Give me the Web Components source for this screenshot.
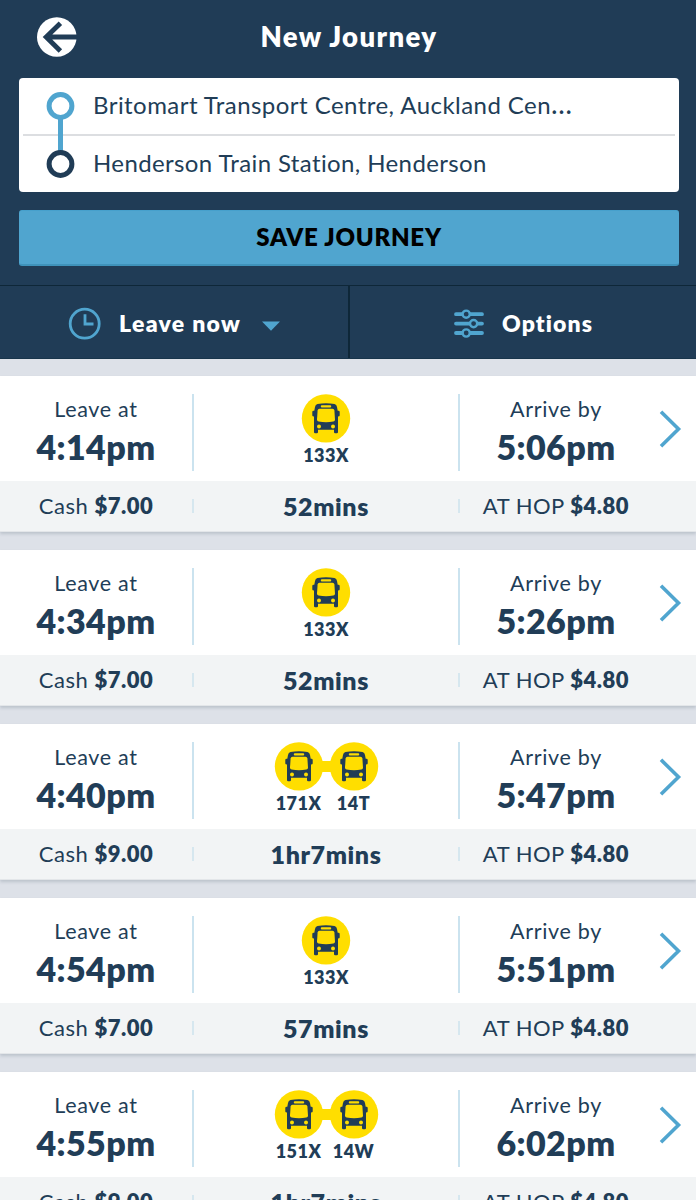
<!DOCTYPE html>
<html lang="en">
<head>
<meta charset="utf-8">
<title>New Journey</title>
<style>
    html {
        background: #dde1e8;
    }

    body {
        margin: 0;
        height: 1200px;
        overflow: hidden;
        font-family: Lato, "Open Sans", sans-serif;
        color: #213d57;
        --navy: #203c56;
        --blue: #50a5cf;
        --yellow: #ffde00;
    }

    .more {
        letter-spacing: 0;
        font-size: 28px;
        line-height: 0;
    }
</style>
</head>
<body>

<journey-header heading="New Journey">
    <journey-places slot="places">
        <span slot="from">Britomart Transport Centre, Auckland Cen<span class="more">…</span></span>
        <span slot="to" style="letter-spacing: 0.38px">Henderson Train Station, Henderson</span>
    </journey-places>
    <save-button slot="action">SAVE JOURNEY</save-button>
</journey-header>
<filter-bar></filter-bar>
<trip-list></trip-list>

<script>
// ---------- header ----------
var headerTemplate = document.createElement("template");
headerTemplate.innerHTML = `
<style>
    :host {
        display: block;
        height: 285px;
        box-sizing: border-box;
        padding: 0 17px 0 19px;
        background: var(--navy);
    }

    .bar {
        display: grid;
        grid-template-columns: 76px 1fr 76px;
        align-items: center;
        height: 78px;
        padding-bottom: 4px;
        box-sizing: border-box;
    }

    svg {
        display: block;
        margin-left: 17px;
    }

    h1 {
        margin: 0;
        text-align: center;
        font-size: 27.5px;
        line-height: 34px;
        font-weight: 800;
        letter-spacing: 1.4px;
        color: white;
    }

    ::slotted([slot=action]) {
        margin-top: 18px;
    }
</style>
<div class="bar">
    <svg width="42" height="42" viewBox="0 0 42 42">
        <circle cx="20.8" cy="21" r="19.8" fill="white"/>
        <path d="M24.4 7.2 L10.2 21 L24.4 35 M11 21 H42" fill="none" stroke="#203c56" stroke-width="4.9"/>
    </svg>
    <h1></h1>
</div>
<slot name="places"></slot>
<slot name="action"></slot>
`;

class JourneyHeader extends HTMLElement {
    constructor() {
        super();
        this.attachShadow({mode: "open"});
    }

    connectedCallback() {
        this.shadowRoot.appendChild(headerTemplate.content.cloneNode(true));
        this.shadowRoot.querySelector("h1").textContent = this.getAttribute("heading");
    }
}

// ---------- from / to box ----------
var placesTemplate = document.createElement("template");
placesTemplate.innerHTML = `
<style>
    :host {
        display: grid;
        grid-template-columns: 74px 1fr;
        height: 114px;
        border-radius: 4px;
        background: white;
        font-size: 24px;
        letter-spacing: 0.45px;
        background-image: linear-gradient(#dcdee1, #dcdee1);
        background-size: 652px 2px;
        background-position: 4px 56px;
        background-repeat: no-repeat;
    }

    .rows {
        display: grid;
        grid-template-rows: 56px 58px;
        line-height: 54px;
        white-space: nowrap;
    }

    ::slotted([slot=to]) {
        line-height: 57px;
    }

    svg {
        display: block;
    }
</style>
<svg width="74" height="114" viewBox="0 0 74 114">
    <path d="M41.5 38 V76" stroke="#50a5cf" stroke-width="5"/>
    <circle cx="41.5" cy="28" r="11.4" fill="white" stroke="#50a5cf" stroke-width="5"/>
    <circle cx="41.5" cy="86" r="11.4" fill="white" stroke="#203c56" stroke-width="5"/>
</svg>
<div class="rows">
    <slot name="from"></slot>
    <slot name="to"></slot>
</div>
`;

class JourneyPlaces extends HTMLElement {
    constructor() {
        super();
        this.attachShadow({mode: "open"});
    }

    connectedCallback() {
        this.shadowRoot.appendChild(placesTemplate.content.cloneNode(true));
    }
}

// ---------- save button ----------
var saveTemplate = document.createElement("template");
saveTemplate.innerHTML = `
<style>
    :host {
        display: block;
        height: 56px;
        box-sizing: border-box;
        border-radius: 3px;
        border-top: 1px solid #46a0cc;
        border-bottom: 2px solid #3f93bb;
        background: var(--blue);
        color: black;
        text-align: center;
        font-size: 24px;
        line-height: 52px;
        font-weight: 800;
        letter-spacing: 0.75px;
        cursor: pointer;
    }
</style>
<slot></slot>
`;

class SaveButton extends HTMLElement {
    constructor() {
        super();
        this.attachShadow({mode: "open"});
    }

    connectedCallback() {
        this.shadowRoot.appendChild(saveTemplate.content.cloneNode(true));
    }
}

// ---------- leave now / options ----------
var filterTemplate = document.createElement("template");
filterTemplate.innerHTML = `
<style>
    :host {
        display: grid;
        grid-template-columns: 348px 1fr;
        height: 74px;
        box-sizing: border-box;
        border-top: 1px solid #0e2738;
        border-bottom: 1px solid #18354b;
        background: var(--navy);
        color: white;
        font-size: 23px;
        font-weight: 800;
        letter-spacing: 1.3px;
    }

    div {
        display: flex;
        align-items: center;
        padding-top: 2px;
    }

    .leave {
        padding-left: 68px;
        border-right: 2px solid #0e2738;
        box-sizing: border-box;
        width: 350px;
    }

    .options {
        padding-left: 105px;
        letter-spacing: 1.1px;
    }

    .leave span {
        margin-left: 17px;
        width: 143px;
    }

    .options span {
        margin-left: 17px;
    }

    .caret {
        margin-top: 5px;
    }
</style>
<div class="leave">
    <svg width="34" height="34" viewBox="0 0 34 34" fill="none" stroke="#50a5cf" stroke-width="2.8">
        <circle cx="16.7" cy="17.7" r="14.5"/>
        <path d="M17 8.3 V18 H25.5"/>
    </svg>
    <span>Leave now</span>
    <svg class="caret" width="18" height="10" viewBox="0 0 18 10"><path d="M0 .5 H18 L9 9.7 Z" fill="#50a5cf"/></svg>
</div>
<div class="options">
    <svg width="32" height="30" viewBox="0 0 32 30" stroke="#50a5cf" stroke-linecap="round">
        <path d="M3 6.2 H29 M3 15.6 H29 M3 25 H29" stroke-width="3.8"/>
        <g fill="#203c56" stroke-width="2.4">
            <circle cx="13.2" cy="6.2" r="3.6"/>
            <circle cx="20.6" cy="15.6" r="3.6"/>
            <circle cx="13.2" cy="25" r="3.6"/>
        </g>
    </svg>
    <span>Options</span>
</div>
`;

class FilterBar extends HTMLElement {
    constructor() {
        super();
        this.attachShadow({mode: "open"});
    }

    connectedCallback() {
        this.shadowRoot.appendChild(filterTemplate.content.cloneNode(true));
    }
}

// ---------- bus badge, the route name goes below it ----------
var badgeTemplate = document.createElement("template");
badgeTemplate.innerHTML = `
<style>
    :host {
        display: flex;
        flex-direction: column;
        align-items: center;
        width: 48px;
        font-size: 18px;
        line-height: 24px;
        font-weight: 800;
        letter-spacing: 0.5px;
    }

    svg {
        display: block;
        overflow: visible;
    }

    .link {
        display: none;
    }

    :host([linked]) .link {
        display: block;
    }
</style>
<svg width="48" height="49" viewBox="0 0 48 49">
    <rect class="link" x="-12" y="19" width="16" height="11" fill="#ffde00"/>
    <circle cx="24" cy="24.4" r="24.2" fill="#ffde00"/>
    <path d="M15.5 10 Q24 8.4 32.5 10 Q34.6 10.5 35 13 L35.7 16.7 H36.4 Q37.7 16.7 37.7 18 V21.5 Q37.7 22.6 36 22.6 V38 Q36 39.2 34.8 39.2 H33.2 Q32 39.2 32 38 V35.8 H16 V38 Q16 39.2 14.8 39.2 H13.2 Q12 39.2 12 38 V22.6 Q10.3 22.6 10.3 21.5 V18 Q10.3 16.7 11.6 16.7 H12.3 L13 13 Q13.4 10.5 15.5 10 Z" fill="#213d57"/>
    <rect x="18.8" y="11.2" width="10.4" height="2.2" rx="1" fill="#ffde00"/>
    <path d="M17.5 14.7 H30.5 Q32.2 14.7 32.4 16.5 L33 25.5 Q33 27.3 31.3 27.6 Q24 28.8 16.7 27.6 Q15 27.3 15 25.5 L15.6 16.5 Q15.8 14.7 17.5 14.7 Z" fill="#ffde00"/>
    <circle cx="17" cy="32.6" r="2" fill="#ffde00"/>
    <circle cx="31" cy="32.6" r="2" fill="#ffde00"/>
</svg>
<slot></slot>
`;

class BusBadge extends HTMLElement {
    constructor() {
        super();
        this.attachShadow({mode: "open"});
    }

    connectedCallback() {
        this.shadowRoot.appendChild(badgeTemplate.content.cloneNode(true));
    }
}

// ---------- one trip ----------
var tripTemplate = document.createElement("template");
tripTemplate.innerHTML = `
<style>
    :host {
        display: block;
        height: 156px;
        box-shadow: 0 2px 3px rgba(40, 60, 80, 0.18);
        background: #f2f4f5;
    }

    .top, .bottom {
        display: grid;
        grid-template-columns: 192px 268px 192px 1fr;
        text-align: center;
    }

    .top {
        height: 105px;
        padding: 18px 0 10px;
        box-sizing: border-box;
        background: white;
    }

    .bottom {
        height: 51px;
        padding: 18px 0;
        box-sizing: border-box;
        line-height: 14px;
        font-size: 22px;
        letter-spacing: 0.5px;
        border-bottom: 1px solid #e3e6e9;
    }

    .mid {
        border-left: 2px solid #cbe3ef;
        border-right: 2px solid #cbe3ef;
        box-sizing: border-box;
        display: flex;
        justify-content: center;
        gap: 7px;
    }

    .label {
        font-size: 21.5px;
        line-height: 30px;
        letter-spacing: 0.7px;
    }

    .time {
        font-size: 34px;
        line-height: 46px;
        font-weight: 800;
        letter-spacing: 0.4px;
    }

    .duration {
        font-size: 25px;
        font-weight: 800;
        letter-spacing: 0.6px;
        border-color: #d6e7ef;
    }

    b {
        font-weight: 800;
    }

    .chevron {
        margin: 15px 0 0 6px;
    }
</style>
<div class="top">
    <div>
        <div class="label">Leave at</div>
        <div class="time leave"></div>
    </div>
    <div class="mid routes"></div>
    <div>
        <div class="label">Arrive by</div>
        <div class="time arrive"></div>
    </div>
    <svg class="chevron" width="26" height="40" viewBox="0 0 26 40">
        <path d="M3 2.8 L20.5 20 L3 37.2" fill="none" stroke="#50a5cf" stroke-width="3.6"/>
    </svg>
</div>
<div class="bottom">
    <div class="cash">Cash <b></b></div>
    <div class="mid duration"></div>
    <div class="hop">AT HOP <b></b></div>
</div>
`;

class TripCard extends HTMLElement {
    constructor() {
        super();
        this.attachShadow({mode: "open"});
    }

    connectedCallback() {
        var root = this.shadowRoot;
        root.appendChild(tripTemplate.content.cloneNode(true));
        root.querySelector(".leave").textContent = this.getAttribute("leave");
        root.querySelector(".arrive").textContent = this.getAttribute("arrive");
        root.querySelector(".duration").textContent = this.getAttribute("duration");
        root.querySelector(".cash b").textContent = this.getAttribute("cash");
        root.querySelector(".hop b").textContent = this.getAttribute("hop");

        this.getAttribute("routes").split(",").forEach(function (route, i) {
            var badge = document.createElement("bus-badge");
            badge.textContent = route;
            if (i > 0) badge.setAttribute("linked", "");
            root.querySelector(".routes").appendChild(badge);
        });
    }
}

// ---------- list of trips ----------
var trips = [
    {leave: "4:14pm", arrive: "5:06pm", routes: "133X", duration: "52mins", cash: "$7.00", hop: "$4.80"},
    {leave: "4:34pm", arrive: "5:26pm", routes: "133X", duration: "52mins", cash: "$7.00", hop: "$4.80"},
    {leave: "4:40pm", arrive: "5:47pm", routes: "171X,14T", duration: "1hr7mins", cash: "$9.00", hop: "$4.80"},
    {leave: "4:54pm", arrive: "5:51pm", routes: "133X", duration: "57mins", cash: "$7.00", hop: "$4.80"},
    {leave: "4:55pm", arrive: "6:02pm", routes: "151X,14W", duration: "1hr7mins", cash: "$9.00", hop: "$4.80"}
];

class TripList extends HTMLElement {
    constructor() {
        super();
        this.attachShadow({mode: "open"});
    }

    connectedCallback() {
        this.shadowRoot.innerHTML = `
<style>
    :host {
        display: flex;
        flex-direction: column;
        gap: 18px;
        padding-top: 17px;
    }
</style>`;
        trips.forEach((trip) => {
            var card = document.createElement("trip-card");
            for (var key in trip) card.setAttribute(key, trip[key]);
            this.shadowRoot.appendChild(card);
        });
    }
}

customElements.define("journey-header", JourneyHeader);
customElements.define("journey-places", JourneyPlaces);
customElements.define("save-button", SaveButton);
customElements.define("filter-bar", FilterBar);
customElements.define("bus-badge", BusBadge);
customElements.define("trip-card", TripCard);
customElements.define("trip-list", TripList);
</script>
</body>
</html>
